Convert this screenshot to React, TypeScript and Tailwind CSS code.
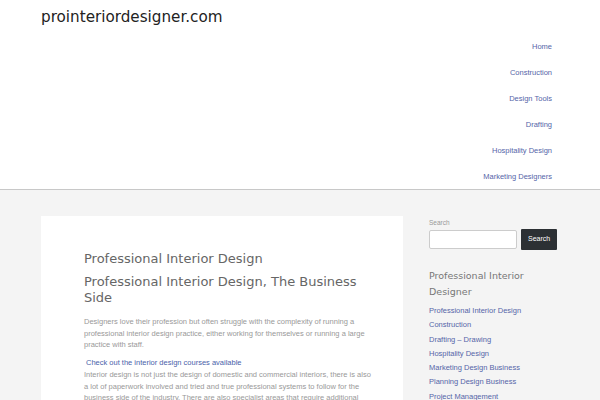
const nav = [
  "Home",
  "Construction",
  "Design Tools",
  "Drafting",
  "Hospitality Design",
  "Marketing Designers",
];

const cats = [
  "Professional Interior Design",
  "Construction",
  "Drafting – Drawing",
  "Hospitality Design",
  "Marketing Design Business",
  "Planning Design Business",
  "Project Management",
];

const body = { fontFamily: '"Liberation Sans", Arial, sans-serif' };

export default function App() {
  return (
    <div
      className="w-[600px] h-[400px] overflow-hidden bg-[#f4f4f4]"
      style={{ fontFamily: '"DejaVu Sans", sans-serif' }}
    >
      <header className="bg-white border-b border-[#c8c8c8] h-[190px] flex justify-between pl-[41px] pr-[48px]">
        <div className="pt-[6px] text-[15.2px] text-[#222] leading-[22px]">
          prointeriordesigner.com
        </div>
        <nav className="flex flex-col items-end pt-[41px] gap-[15px]" style={body}>
          {nav.map((n) => (
            <a key={n} className="text-[7.5px] leading-[11px] text-[#5565a8]">
              {n}
            </a>
          ))}
        </nav>
      </header>
      <div className="flex pl-[41px] pt-[26px] gap-[26px]">
        <main className="w-[362px] bg-white pl-[43px] pr-[30px] pt-[33px] h-[300px]">
          <h2 className="text-[13px] leading-[20px] text-[#666]">
            Professional Interior Design
          </h2>
          <h1 className="text-[13px] leading-[16px] text-[#666] mt-[5px] pr-[4px]">
            Professional Interior Design, The Business Side
          </h1>
          <div style={body}>
            <p className="text-[7.5px] leading-[11.5px] text-[#999] mt-[10px]">
              Designers love their profession but often struggle with the
              complexity of running a professional interior design practice,
              either working for themselves or running a large practice with
              staff.
            </p>
            <p className="text-[7.5px] leading-[11.5px] text-[#4a62aa] mt-[6px] pl-[2px]">
              Check out the interior design courses available
            </p>
            <p className="text-[7.5px] leading-[11.5px] text-[#999] mt-[1px]">
              Interior design is not just the design of domestic and commercial
              interiors, there is also a lot of paperwork involved and tried and
              true professional systems to follow for the business side of the
              industry. There are also specialist areas that require additional
            </p>
          </div>
        </main>
        <aside className="w-[128px] pt-[2px]">
          <div className="text-[6.5px] leading-[10px] text-[#999]" style={body}>
            Search
          </div>
          <div className="flex gap-[4px] mt-[1px] items-center">
            <div className="w-[89px] h-[19px] bg-white border border-[#ccc] rounded-[2px]" />
            <button
              className="w-[36px] h-[21px] bg-[#2c3034] text-white text-[7px] rounded-[1px]"
              style={body}
            >
              Search
            </button>
          </div>
          <h3 className="text-[9.5px] leading-[16px] text-[#777] mt-[18px]">
            Professional Interior Designer
          </h3>
          <ul className="mt-[4px] flex flex-col" style={body}>
            {cats.map((c) => (
              <li key={c} className="text-[7.5px] leading-[14.3px] text-[#5565a8]">
                {c}
              </li>
            ))}
          </ul>
        </aside>
      </div>
    </div>
  );
}
